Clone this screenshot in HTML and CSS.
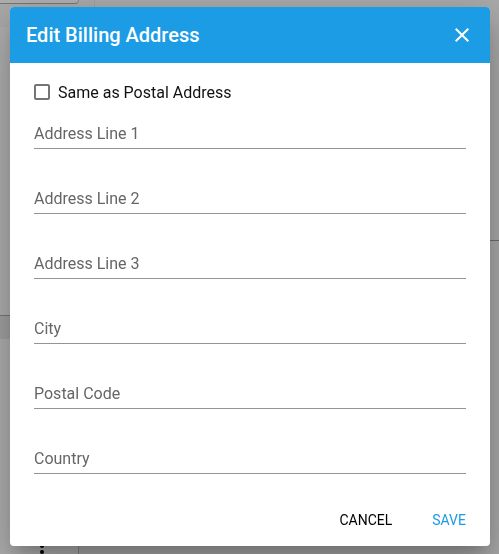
FILE: index.html
```html
<!DOCTYPE html>
<html lang="en">
<head>
    <meta charset="UTF-8">
    <meta name="viewport" content="width=device-width, initial-scale=1.0">
    <title>Edit Billing Address</title>
    <link rel="stylesheet" href="styles.css">
</head>
<body>
    <!-- page behind the dialog -->
    <div class="page">
        <div class="side">
            <div class="search-row">
                <div class="search-card"></div>
            </div>
            <div class="side-panel"></div>
            <div class="side-gap"></div>
            <div class="side-list">
                <svg class="more-icon" width="4" height="16" viewBox="0 0 4 16">
                    <circle cx="2" cy="2" r="2"/>
                    <circle cx="2" cy="8" r="2"/>
                    <circle cx="2" cy="14" r="2"/>
                </svg>
            </div>
        </div>
        <div class="content">
            <div class="content-top"></div>
        </div>
    </div>

    <div class="overlay">
        <form class="dialog" role="dialog" aria-labelledby="dialogTitle">
            <header class="dialog-header">
                <h2 id="dialogTitle">Edit Billing Address</h2>
                <button type="button" class="close-button" aria-label="Close">
                    <svg width="24" height="24" viewBox="0 0 24 24">
                        <path d="M19 6.41L17.59 5 12 10.59 6.41 5 5 6.41 10.59 12 5 17.59 6.41 19 12 13.41 17.59 19 19 17.59 13.41 12z"/>
                    </svg>
                </button>
            </header>

            <div class="dialog-body">
                <label class="checkbox-row">
                    <input type="checkbox" class="checkbox">
                    Same as Postal Address
                </label>
                <div class="field">
                    <input type="text" id="address1" placeholder=" ">
                    <label for="address1">Address Line 1</label>
                </div>
                <div class="field">
                    <input type="text" id="address2" placeholder=" ">
                    <label for="address2">Address Line 2</label>
                </div>
                <div class="field">
                    <input type="text" id="address3" placeholder=" ">
                    <label for="address3">Address Line 3</label>
                </div>
                <div class="field">
                    <input type="text" id="city" placeholder=" ">
                    <label for="city">City</label>
                </div>
                <div class="field">
                    <input type="text" id="postalCode" placeholder=" ">
                    <label for="postalCode">Postal Code</label>
                </div>
                <div class="field">
                    <input type="text" id="country" placeholder=" ">
                    <label for="country">Country</label>
                </div>
            </div>

            <footer class="dialog-actions">
                <button type="button" class="text-button">CANCEL</button>
                <button type="submit" class="text-button primary">SAVE</button>
            </footer>
        </form>
    </div>
</body>
</html>
```

FILE: styles.css
```css
* {
    box-sizing: border-box;
}
body {
    margin: 0;
    font-family: Roboto, sans-serif;
    font-size: 16px;
    color: #111;
    overflow: hidden;
}
.page {
    display: flex;
    height: 100vh;
    background: #aaa;
}
.side {
    display: flex;
    flex-direction: column;
    width: 95px;
}
.search-row {
    height: 27px;
    border-right: 1px solid #a0a0a0;
}
.search-card {
    width: 79px;
    height: 4px;
    border-bottom: 1px solid #777;
    border-right: 1px solid #888;
    border-radius: 0 0 4px 0;
    background: #b0b0b0;
}
.side-panel {
    height: 289px;
    border-bottom: 1px solid #777;
    background: #b0b0b0;
}
.side-gap {
    height: 23px;
    background: #a2a2a2;
}
.side-list {
    display: flex;
    flex: 1;
    align-items: flex-end;
    width: 79px;
    padding-left: 40px;
    border-right: 1px solid #888;
    background: #b0b0b0;
}
.more-icon {
    fill: #000;
}
.content {
    flex: 1;
}
.content-top {
    height: 241px;
    border-bottom: 1px solid #6c6c6c;
}
.overlay {
    position: fixed;
    inset: 0;
    padding: 7px 9px 8px 10px;
}
.dialog {
    max-width: 560px;
    margin: 0 auto;
    border-radius: 4px;
    background: #fff;
    box-shadow: 0 11px 15px -7px rgba(0, 0, 0, 0.2),
                0 24px 38px 3px rgba(0, 0, 0, 0.14),
                0 9px 46px 8px rgba(0, 0, 0, 0.12);
    overflow: hidden;
}
.dialog-header {
    display: flex;
    justify-content: space-between;
    align-items: center;
    height: 56px;
    padding: 0 16px;
    background: #1c9ce4;
    color: #fff;
}
.dialog-header h2 {
    margin: 0;
    font-size: 20px;
    font-weight: 500;
}
.close-button {
    display: flex;
    padding: 0;
    border: none;
    background: none;
    fill: #fff;
    cursor: pointer;
}
.dialog-body {
    padding: 17px 24px 0;
}
.checkbox-row {
    display: flex;
    align-items: center;
    gap: 8px;
    height: 24px;
    margin-bottom: 13px;
}
.checkbox {
    appearance: none;
    width: 16px;
    height: 16px;
    margin: 0;
    border: 2px solid #757575;
    border-radius: 2px;
    background: #fff;
}
.checkbox:checked {
    border-color: #1c9ce4;
    background: #1c9ce4;
}
.field {
    position: relative;
    margin-bottom: 33px;
}
.field input {
    display: block;
    width: 100%;
    height: 32px;
    padding: 0;
    border: none;
    border-bottom: 1px solid #949494;
    outline: none;
    background: none;
    font: inherit;
}
.field label {
    position: absolute;
    top: 0;
    left: 0;
    line-height: 34px;
    color: #666;
    pointer-events: none;
}
.field input:focus {
    border-color: #1c9ce4;
}
.field input:focus + label,
.field input:not(:placeholder-shown) + label {
    top: -16px;
    font-size: 12px;
}
.dialog-actions {
    display: flex;
    justify-content: flex-end;
    gap: 8px;
    padding: 0 8px 8px;
    margin-top: -5px;
}
.text-button {
    height: 36px;
    padding: 0 16px;
    border: none;
    background: none;
    font-family: inherit;
    font-size: 14px;
    color: #000;
    cursor: pointer;
}
.text-button.primary {
    color: #1c9ce4;
}
```
